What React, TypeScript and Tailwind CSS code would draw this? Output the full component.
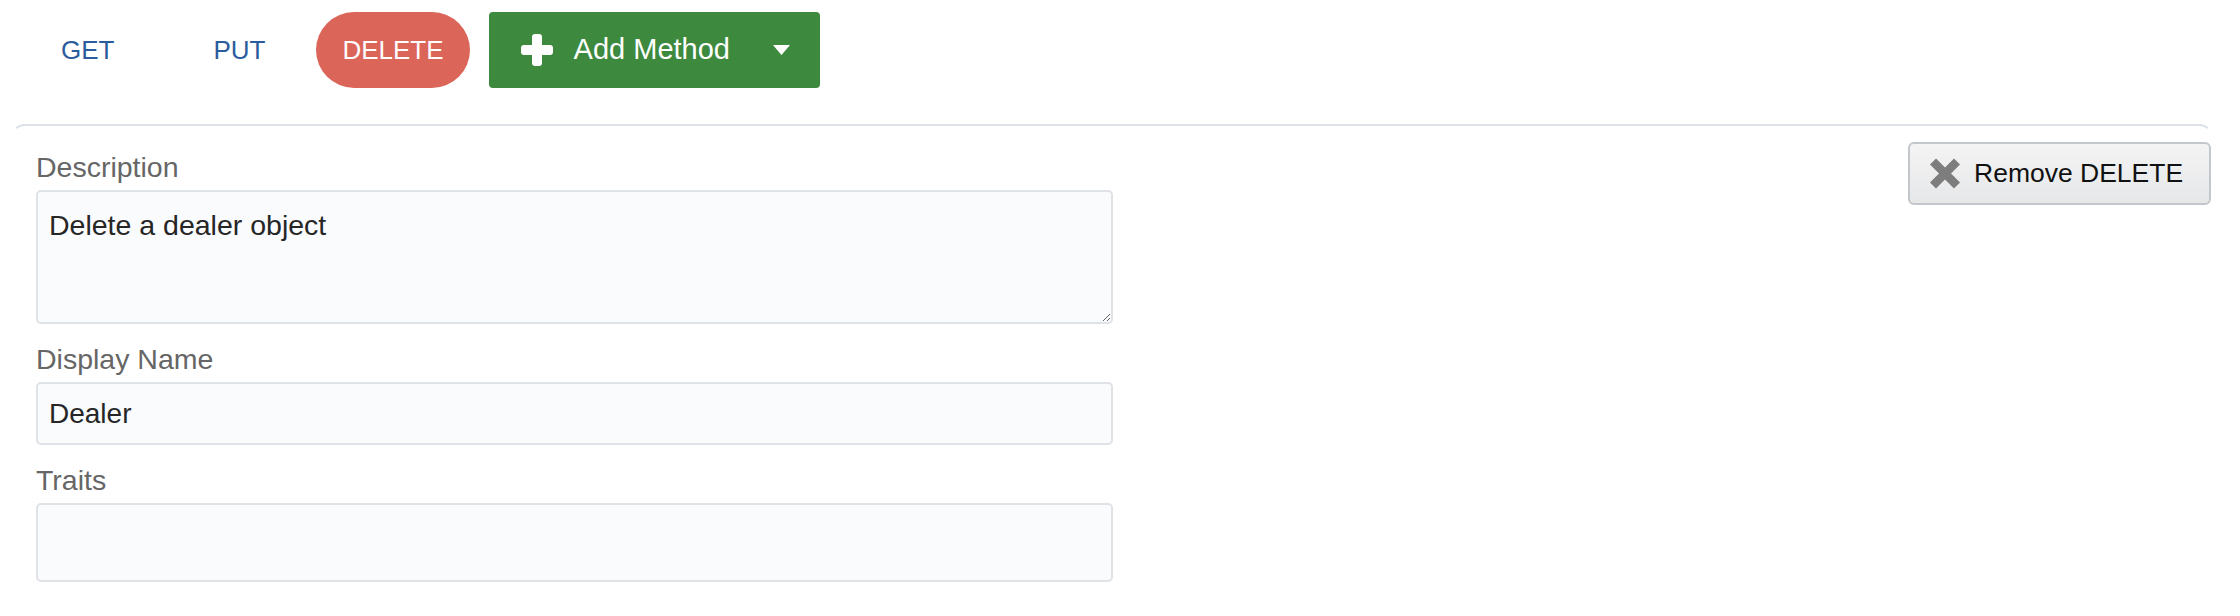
import React from 'react'

function PlusIcon() {
  return (
    <svg width="32" height="32" viewBox="0 0 32 32" aria-hidden="true">
      <rect x="11" y="0" width="10" height="32" rx="3" fill="#fff" />
      <rect x="0" y="11" width="32" height="10" rx="3" fill="#fff" />
    </svg>
  )
}

function CaretIcon() {
  return (
    <svg width="17" height="10" viewBox="0 0 17 10" aria-hidden="true">
      <path d="M0 0 H17 L8.5 10 Z" fill="#fff" />
    </svg>
  )
}

function CrossIcon() {
  return (
    <svg width="32" height="31" viewBox="0 0 32 31" aria-hidden="true">
      <path d="M4 3.5 L28 27.5 M28 3.5 L4 27.5" stroke="#7d7d7d" strokeWidth="8.5" />
    </svg>
  )
}

export default function App() {
  return (
    <div className="w-[2240px] h-[616px] bg-white font-['Liberation_Sans','Helvetica_Neue',Arial,sans-serif] overflow-hidden">
      {/* method tabs */}
      <nav className="flex items-center pt-[12px]" aria-label="Methods">
        <a className="ml-[35px] h-[76px] px-[26px] flex items-center text-[26px] text-[#2b5c9e]">GET</a>
        <a className="ml-[47px] h-[76px] px-[26px] flex items-center text-[26px] text-[#2b5c9e]">PUT</a>
        <a className="ml-[25px] h-[76px] px-[26px] flex items-center rounded-full bg-[#dc655a] text-[26px] text-white">
          DELETE
        </a>
        <button
          type="button"
          className="ml-[19px] h-[76px] w-[331px] pl-[32px] flex items-center rounded-[4px] bg-[#3d8a3e] text-white"
        >
          <PlusIcon />
          <span className="ml-[21px] text-[29px]">Add Method</span>
          <span className="ml-[43px] flex items-center">
            <CaretIcon />
          </span>
        </button>
      </nav>

      {/* method panel */}
      <section className="mt-[36px] ml-[12px] mr-[28px] border-t-2 border-x-2 border-[#dde2ea] rounded-t-[12px] [border-left-color:transparent] [border-right-color:transparent] flex justify-between">
        <div className="pl-[22px] pt-[25px] w-[1099px] flex flex-col text-[28px] leading-[32px]">
          <label className="text-[#666666] text-[28.5px] mb-[7px]">Description</label>
          <textarea
            defaultValue="Delete a dealer object"
            className="h-[134px] w-full border-2 border-[#dfe2e7] rounded-[5px] bg-[#fafbfd] px-[11px] pt-[17px] text-[28.5px] text-[#262626] outline-none"
          />
          <label className="text-[#666666] text-[28.5px] mt-[19px] mb-[7px]">Display Name</label>
          <input
            defaultValue="Dealer"
            className="h-[63px] w-full border-2 border-[#dfe2e7] rounded-[5px] bg-[#fafbfd] px-[11px] text-[#262626] outline-none"
          />
          <label className="text-[#666666] text-[28.5px] mt-[19px] mb-[7px]">Traits</label>
          <input className="h-[79px] w-full border-2 border-[#dfe2e7] rounded-[5px] bg-[#fafbfd] px-[11px] outline-none" />
        </div>

        <div className="pt-[16px] mr-[-1px]">
          <button
            type="button"
            className="h-[63px] w-[303px] pl-[19px] flex items-center gap-[13px] rounded-[6px] border-2 border-[#c3c7cc] bg-gradient-to-b from-[#f4f4f5] to-[#e6e7e8] text-[26.5px] text-[#111111]"
          >
            <CrossIcon />
            <span>Remove DELETE</span>
          </button>
        </div>
      </section>
    </div>
  )
}
